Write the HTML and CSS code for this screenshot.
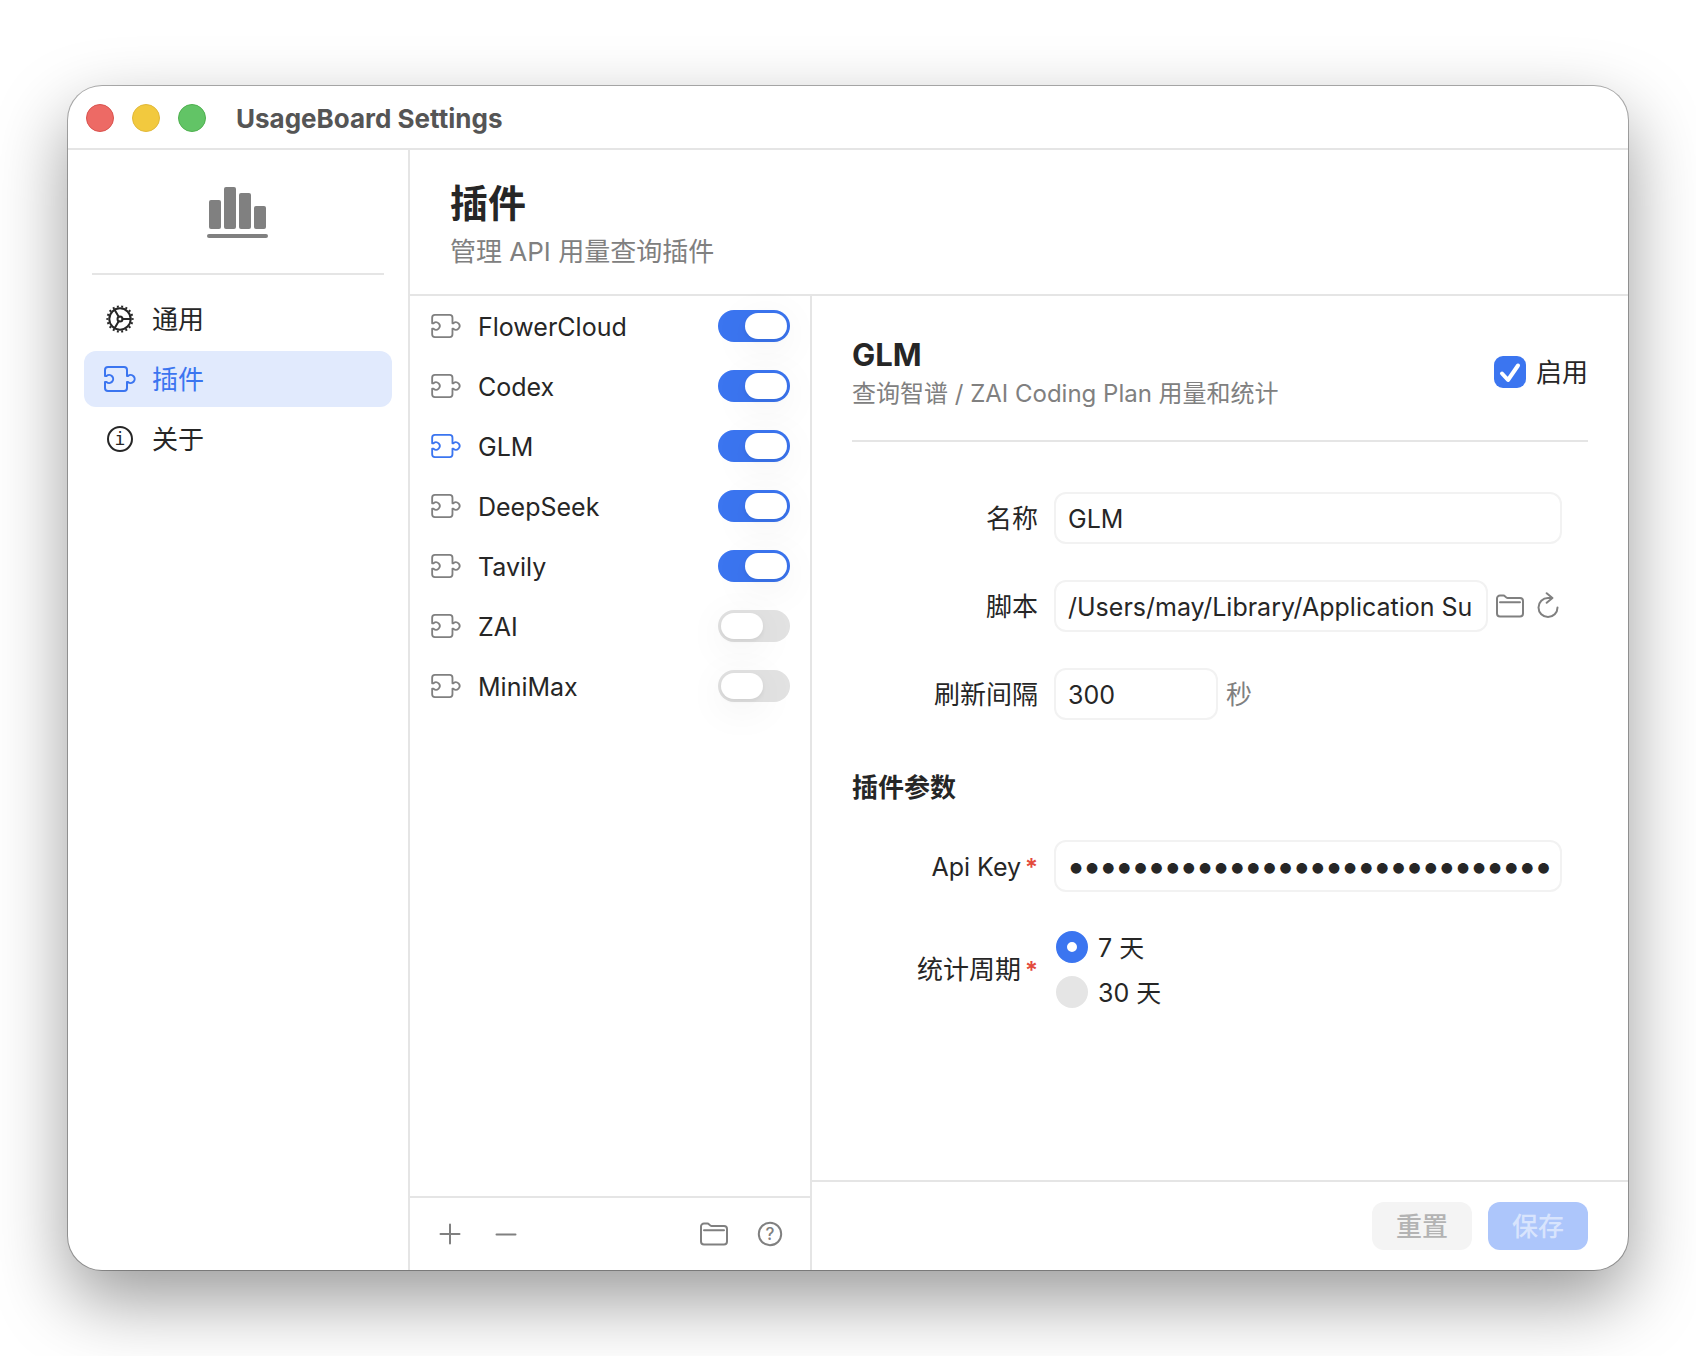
FILE: index.html
```html
<!DOCTYPE html>
<html lang="zh-CN">
<head>
<meta charset="utf-8">
<meta name="viewport" content="width=device-width, initial-scale=1">
<title>UsageBoard Settings</title>
<link rel="stylesheet" href="styles.css">
</head>
<body>
<svg class="sprite" aria-hidden="true">
  <symbol id="puzzle" viewBox="0 0 32 26">
    <path d="M1 10V4a3 3 0 0 1 3-3h16a3 3 0 0 1 3 3v6h1a4 4 0 1 1 0 6h-1v6a3 3 0 0 1-3 3H4a3 3 0 0 1-3-3v-6h1.5a4 4 0 1 0 0-6z"/>
  </symbol>
  <symbol id="folder" viewBox="0 0 28 24">
    <path d="M1 19.500V4.500a3 3 0 0 1 3-3h3.500c1.500 0 2.200 2.500 4 2.500H24a3 3 0 0 1 3 3v12.500a3 3 0 0 1-3 3H4a3 3 0 0 1-3-3zM4 8.200h20"/>
  </symbol>
</svg>
<div class="window">
  <header class="titlebar">
    <div class="lights">
      <button class="light light-close" type="button" aria-label="关闭"></button>
      <button class="light light-min" type="button" aria-label="最小化"></button>
      <button class="light light-zoom" type="button" aria-label="缩放"></button>
    </div>
    <span class="window-title">UsageBoard Settings</span>
  </header>
  <div class="body">
    <aside class="sidebar">
      <div class="logo">
        <svg width="62" height="52" viewBox="0 0 62 52" aria-hidden="true">
          <rect x="2" y="13" width="12" height="29" rx="2"/>
          <rect x="17" y="0" width="12" height="42" rx="2"/>
          <rect x="32" y="6" width="12" height="36" rx="2"/>
          <rect x="47" y="19" width="12" height="23" rx="2"/>
          <rect x="0" y="47" width="61" height="4" rx="2"/>
        </svg>
      </div>
      <nav class="nav">
        <a class="nav-item" href="#general">
          <svg class="nav-icon" viewBox="0 0 32 28" aria-hidden="true">
            <circle cx="16" cy="14" r="10.700"/>
            <circle cx="16" cy="14" r="12.600" pathLength="72" stroke-dasharray="1.800 2.200" stroke-dashoffset=".9"/>
            <circle cx="16" cy="14" r="2.500"/>
            <path d="M18.500 14h8M14.700 11.800l-4.100-7.100M14.700 16.200l-4.100 7.100"/>
          </svg>
          <span>通用</span>
        </a>
        <a class="nav-item is-active" href="#plugins" aria-current="page">
          <svg class="nav-icon" viewBox="0 0 32 26" aria-hidden="true"><use href="#puzzle"/></svg>
          <span>插件</span>
        </a>
        <a class="nav-item" href="#about">
          <svg class="nav-icon" viewBox="0 0 32 28" aria-hidden="true">
            <circle cx="16" cy="14" r="12"/>
            <text class="info-mark" x="16" y="20">i</text>
          </svg>
          <span>关于</span>
        </a>
      </nav>
    </aside>
    <main class="content">
      <header class="page-head">
        <h1>插件</h1>
        <p>管理 API 用量查询插件</p>
      </header>
      <div class="panes">
        <section class="list-pane" aria-label="插件">
          <ul class="plugins">
            <li><svg class="plugin-icon" aria-hidden="true"><use href="#puzzle"/></svg><label for="p1">FlowerCloud</label><input class="switch" id="p1" type="checkbox" role="switch" checked></li>
            <li><svg class="plugin-icon" aria-hidden="true"><use href="#puzzle"/></svg><label for="p2">Codex</label><input class="switch" id="p2" type="checkbox" role="switch" checked></li>
            <li class="is-selected"><svg class="plugin-icon" aria-hidden="true"><use href="#puzzle"/></svg><label for="p3">GLM</label><input class="switch" id="p3" type="checkbox" role="switch" checked></li>
            <li><svg class="plugin-icon" aria-hidden="true"><use href="#puzzle"/></svg><label for="p4">DeepSeek</label><input class="switch" id="p4" type="checkbox" role="switch" checked></li>
            <li><svg class="plugin-icon" aria-hidden="true"><use href="#puzzle"/></svg><label for="p5">Tavily</label><input class="switch" id="p5" type="checkbox" role="switch" checked></li>
            <li><svg class="plugin-icon" aria-hidden="true"><use href="#puzzle"/></svg><label for="p6">ZAI</label><input class="switch" id="p6" type="checkbox" role="switch"></li>
            <li><svg class="plugin-icon" aria-hidden="true"><use href="#puzzle"/></svg><label for="p7">MiniMax</label><input class="switch" id="p7" type="checkbox" role="switch"></li>
          </ul>
          <div class="list-tools">
            <button class="icon-btn" type="button" aria-label="添加"><svg width="28" height="28" viewBox="0 0 28 28"><path d="M14 4.500v19M4.500 14h19"/></svg></button>
            <button class="icon-btn" type="button" aria-label="移除"><svg width="28" height="28" viewBox="0 0 28 28"><path d="M4.500 14.500h19"/></svg></button>
            <span class="spacer"></span>
            <button class="icon-btn" type="button" aria-label="打开文件夹"><svg width="28" height="24"><use href="#folder"/></svg></button>
            <button class="icon-btn" type="button" aria-label="帮助"><svg width="28" height="28" viewBox="0 0 28 28"><circle cx="14" cy="14" r="11.200"/><text class="help-mark" x="14" y="20">?</text></svg></button>
          </div>
        </section>
        <form class="detail">
          <div class="detail-scroll">
            <div class="detail-head">
              <div class="detail-title">
                <h2>GLM</h2>
                <p>查询智谱 / ZAI Coding Plan 用量和统计</p>
              </div>
              <label class="enable"><input class="check" type="checkbox" checked><span>启用</span></label>
            </div>
            <div class="fields">
              <div class="field">
                <label for="name">名称</label>
                <input class="text" id="name" type="text" value="GLM">
              </div>
              <div class="field">
                <label for="script">脚本</label>
                <div class="control">
                  <input class="text" id="script" type="text" value="/Users/may/Library/Application Su">
                  <div class="actions">
                    <button class="icon-btn" type="button" aria-label="选择文件"><svg width="28" height="24"><use href="#folder"/></svg></button>
                    <button class="icon-btn" type="button" aria-label="重新载入"><svg width="28" height="28" viewBox="0 0 28 28"><path d="M23.500 15.500a9.500 9.500 0 1 1-9.500-9.500h4.200M12.700 1.200l5.700 4.800-5.700 4.800"/></svg></button>
                  </div>
                </div>
              </div>
              <div class="field">
                <label for="interval">刷新间隔</label>
                <div class="control">
                  <input class="text text-short" id="interval" type="text" inputmode="numeric" value="300">
                  <span class="unit">秒</span>
                </div>
              </div>
            </div>
            <h3>插件参数</h3>
            <div class="fields">
              <div class="field">
                <label class="latin" for="key">Api Key<span class="req">*</span></label>
                <input class="text secret" id="key" type="password" autocomplete="off" value="000000000000000000000000000000">
              </div>
              <div class="field" role="radiogroup" aria-labelledby="period">
                <span class="field-label" id="period">统计周期<span class="req">*</span></span>
                <div class="radios">
                  <label><input class="radio" type="radio" name="period" checked><span>7 天</span></label>
                  <label><input class="radio" type="radio" name="period"><span>30 天</span></label>
                </div>
              </div>
            </div>
          </div>
          <footer class="detail-foot">
            <button class="btn" type="reset" disabled>重置</button>
            <button class="btn btn-primary" type="submit" disabled>保存</button>
          </footer>
        </form>
      </div>
    </main>
  </div>
</div>
</body>
</html>
```
FILE: styles.css
```css
:root {
  --line: #e5e5e5;
  --text: #262626;
  --muted: #808080;
  --accent: #3b75f0;
}

* {
  box-sizing: border-box;
}

body {
  margin: 0;
  min-height: 100vh;
  padding: 86px 68px;
  display: flex;
  background: #fff;
  color: var(--text);
  font: 400 25px/32px Inter, "Noto Sans CJK SC", sans-serif;
}

h1, h2, h3, p, ul {
  margin: 0;
  padding: 0;
}

button, input {
  margin: 0;
  font: inherit;
  color: inherit;
}

.sprite {
  position: absolute;
  width: 0;
  height: 0;
}

.window {
  flex: 1;
  min-width: 0;
  display: flex;
  flex-direction: column;
  overflow: hidden;
  border-radius: 34px;
  background: #fff;
  box-shadow: 0 0 0 1px rgba(0, 0, 0, .3), 0 30px 72px rgba(0, 0, 0, .4);
}

/* Title bar */
.titlebar {
  display: flex;
  align-items: center;
  gap: 30px;
  height: 64px;
  padding: 2px 18px 0;
  border-bottom: 2px solid var(--line);
}

.lights {
  display: flex;
  gap: 18px;
}

.light {
  width: 28px;
  height: 28px;
  padding: 0;
  border: 1px solid #d9524e;
  border-radius: 50%;
  background: #ed6a65;
}

.light-min {
  border-color: #e0b83a;
  background: #f2c93e;
}

.light-zoom {
  border-color: #4fb04f;
  background: #62c466;
}

.window-title {
  padding-top: 2px;
  color: #555;
  font-size: 26px;
  font-weight: 700;
}

.body {
  flex: 1;
  display: flex;
  min-height: 0;
}

/* Sidebar */
.sidebar {
  flex: none;
  width: 342px;
  padding: 0 16px;
  border-right: 2px solid var(--line);
}

.logo {
  display: flex;
  justify-content: center;
  height: 125px;
  margin: 0 8px;
  padding-top: 37px;
  border-bottom: 2px solid var(--line);
}

.logo svg {
  fill: var(--muted);
}

.nav {
  display: flex;
  flex-direction: column;
  gap: 4px;
  padding-top: 16px;
}

.nav-item {
  display: flex;
  align-items: center;
  gap: 16px;
  height: 56px;
  padding: 0 20px;
  border-radius: 12px;
  color: var(--text);
  font-size: 26px;
  text-decoration: none;
}

.nav-item span,
.enable span,
.radios span {
  padding-top: 2px;
}

.nav-item.is-active {
  background: #e1eafd;
  color: var(--accent);
}

.nav-icon {
  width: 32px;
  height: 28px;
}

svg {
  display: block;
  fill: none;
  stroke: currentColor;
  stroke-width: 2;
  stroke-linecap: round;
  stroke-linejoin: round;
}

.logo svg,
svg text {
  stroke: none;
}

.nav-icon circle {
  stroke-linecap: butt;
}

svg text {
  fill: currentColor;
  text-anchor: middle;
}

.info-mark {
  font: 400 18px "DejaVu Sans Mono", monospace;
}

.help-mark {
  font: 500 17px Inter, sans-serif;
}

/* Page header */
.content {
  flex: 1;
  min-width: 0;
  display: flex;
  flex-direction: column;
}

.page-head {
  height: 146px;
  padding: 30px 40px 0;
  border-bottom: 2px solid var(--line);
}

.page-head h1 {
  font-size: 38px;
  font-weight: 700;
  line-height: 46px;
}

.page-head p {
  color: var(--muted);
  font-size: 26px;
  line-height: 52px;
}

.panes {
  flex: 1;
  display: flex;
  min-height: 0;
}

/* Plugin list */
.list-pane {
  flex: none;
  width: 402px;
  display: flex;
  flex-direction: column;
  border-right: 2px solid var(--line);
}

.plugins {
  flex: 1;
  list-style: none;
}

.plugins li {
  display: flex;
  align-items: center;
  height: 60px;
  padding: 0 20px;
}

.plugins label {
  flex: 1;
  padding: 2px 0 0 16px;
}

.plugin-icon {
  width: 32px;
  height: 24px;
  color: var(--muted);
}

.is-selected .plugin-icon {
  color: var(--accent);
}

.switch {
  appearance: none;
  display: flex;
  width: 72px;
  height: 32px;
  padding: 3px;
  border-radius: 16px;
  background: #e2e2e2;
}

.switch::before {
  content: "";
  width: 42px;
  height: 26px;
  border-radius: 13px;
  background: #fff;
  box-shadow: 0 2px 4px rgba(0, 0, 0, .06), 0 8px 40px rgba(0, 0, 0, .08);
}

.switch:checked {
  justify-content: flex-end;
  background: var(--accent);
}

.list-tools {
  display: flex;
  align-items: center;
  gap: 28px;
  height: 74px;
  padding: 0 26px;
  border-top: 2px solid var(--line);
}

.spacer {
  flex: 1;
}

.icon-btn {
  padding: 0;
  border: 0;
  background: none;
  color: var(--muted);
}

/* Detail form */
.detail {
  flex: 1;
  min-width: 0;
  display: flex;
  flex-direction: column;
}

.detail-scroll {
  flex: 1;
  padding: 0 40px;
}

.detail-head {
  display: flex;
  align-items: center;
  justify-content: space-between;
  height: 146px;
  padding-top: 8px;
  border-bottom: 2px solid var(--line);
}

.detail-title {
  padding-top: 4px;
}

.detail-head h2 {
  font-size: 31px;
  font-weight: 700;
  line-height: 40px;
}

.detail-head p {
  color: var(--muted);
  font-size: 24px;
  line-height: 38px;
}

.enable {
  display: flex;
  align-items: center;
  gap: 10px;
  font-size: 26px;
}

.check {
  appearance: none;
  width: 32px;
  height: 32px;
  border-radius: 9px;
  background: #e5e5e5;
}

.check:checked {
  background: var(--accent) url("data:image/svg+xml,%3Csvg xmlns='http://www.w3.org/2000/svg' viewBox='0 0 32 32'%3E%3Cpath d='M8 17.500l6 6.500L24 9.500' fill='none' stroke='white' stroke-width='4' stroke-linecap='round' stroke-linejoin='round'/%3E%3C/svg%3E") center / 100%;
}

.fields {
  display: grid;
  gap: 36px;
  padding: 50px 26px 0 0;
}

.field {
  display: grid;
  grid-template-columns: 186px minmax(0, 1fr);
  align-items: center;
  gap: 16px;
}

.field > label,
.field-label {
  padding-top: 2px;
  font-size: 26px;
  text-align: right;
}

.field > .latin {
  font-size: 25px;
}

.control {
  display: flex;
  align-items: center;
  gap: 8px;
}

.actions {
  display: flex;
  align-items: center;
  gap: 10px;
}

.text {
  flex: 1;
  width: 100%;
  min-width: 0;
  height: 52px;
  padding: 2px 12px 0;
  border: 2px solid #f2f2f2;
  border-radius: 12px;
  background: #fff;
}

.text-short {
  flex: none;
  width: 164px;
}

.secret {
  padding: 0 0 2px 12px;
  font-size: 34px;
  font-weight: 700;
}

.unit {
  padding-top: 2px;
  color: var(--muted);
  font-size: 26px;
}

.req {
  margin-left: 4px;
  color: #e34a3d;
  font-size: 24px;
  font-weight: 600;
}

h3 {
  padding-top: 50px;
  font-size: 26px;
  font-weight: 700;
  line-height: 36px;
}

h3 + .fields {
  gap: 38px;
  padding-top: 34px;
}

.radios {
  display: grid;
  gap: 11px;
  padding-left: 2px;
}

.radios label {
  display: flex;
  align-items: center;
  gap: 10px;
}

.radio {
  appearance: none;
  width: 32px;
  height: 32px;
  border-radius: 50%;
  background: #e5e5e5;
}

.radio:checked {
  border: 11px solid var(--accent);
  background: #fff;
}

.detail-foot {
  display: flex;
  justify-content: flex-end;
  gap: 16px;
  height: 90px;
  padding: 20px 40px;
  border-top: 2px solid var(--line);
}

.btn {
  width: 100px;
  height: 48px;
  padding: 2px 0 0;
  border: 0;
  border-radius: 12px;
  background: #f4f4f4;
  color: #b3b3b3;
  font-size: 26px;
  font-weight: 500;
}

.btn-primary {
  background: #adc6fb;
  color: #d8e4fd;
}
```
